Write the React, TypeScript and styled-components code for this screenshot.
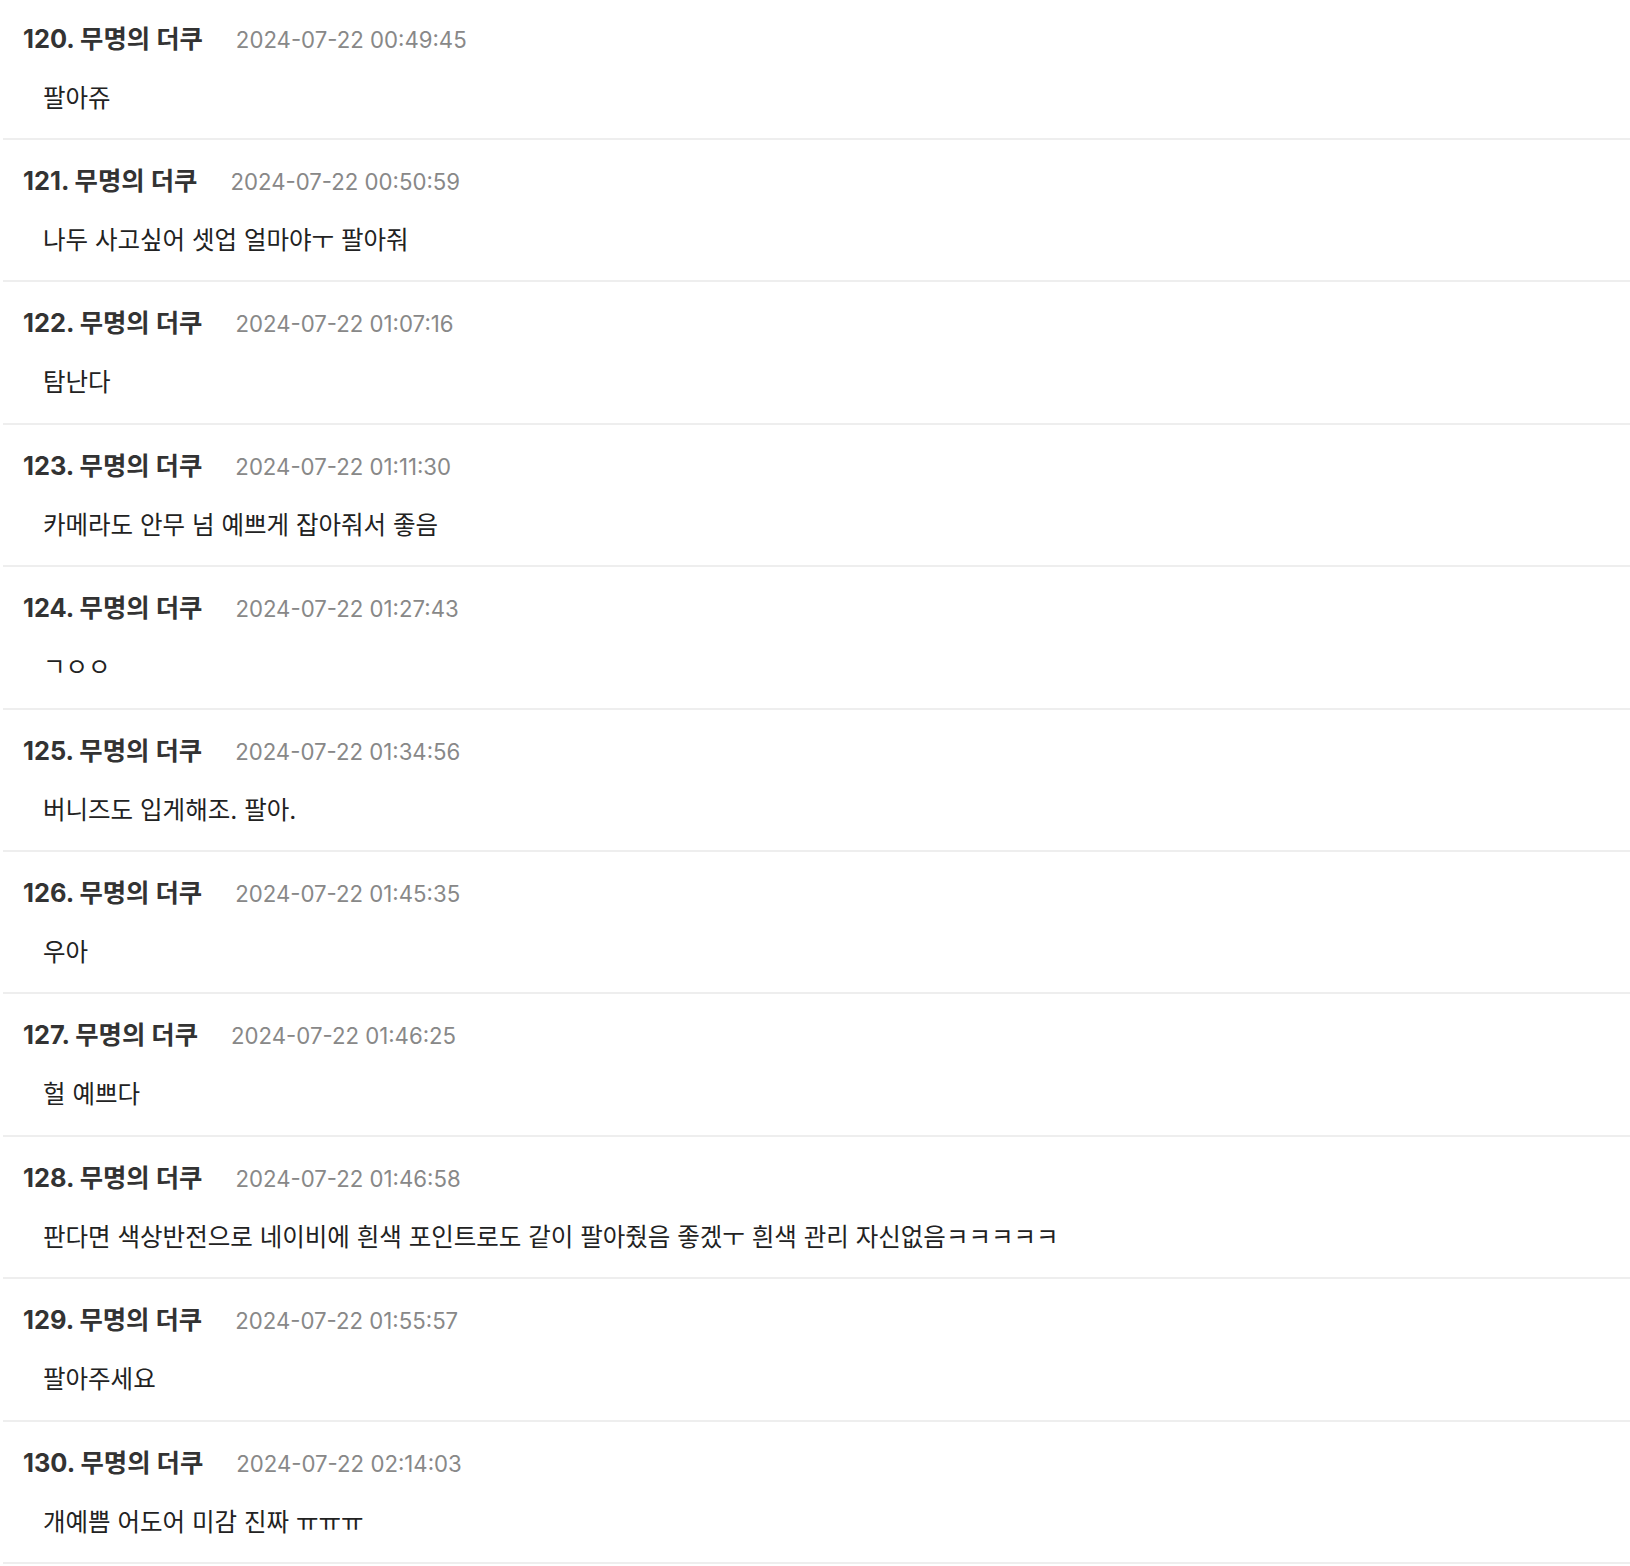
import styled, { createGlobalStyle } from "styled-components";

const GlobalStyle = createGlobalStyle`
    html, body {
        margin: 0;
        padding: 0;
        background: #ffffff;
    }
    body {
        font-family: Inter, "Noto Sans CJK KR", sans-serif;
    }
`

const Lista = styled.ul`
    list-style: none;
    margin: -2.4px 0 0 3px;
    padding: 0;
`
const Item = styled.li`
    box-sizing: border-box;
    height: 142.4px;
    padding: 23px 0 0 20px;
    border-bottom: 2px solid #eeeeee;
`
const Cabecalho = styled.div`
    display: flex;
    align-items: baseline;
    line-height: 36px;
`
const Nome = styled.span`
    font-size: 25.4px;
    font-weight: 700;
    color: #333333;
    margin-right: 33px;
`
const Data = styled.span`
    font-size: 22.2px;
    color: #888888;
`
const Texto = styled.p`
    margin: 23px 0 0 20px;
    font-size: 24.5px;
    line-height: 34px;
    color: #222222;
`

const comentarios = [
    { n: 120, data: "2024-07-22 00:49:45", texto: "팔아쥬" },
    { n: 121, data: "2024-07-22 00:50:59", texto: "나두 사고싶어 셋업 얼마야ㅜ 팔아줘" },
    { n: 122, data: "2024-07-22 01:07:16", texto: "탐난다" },
    { n: 123, data: "2024-07-22 01:11:30", texto: "카메라도 안무 넘 예쁘게 잡아줘서 좋음" },
    { n: 124, data: "2024-07-22 01:27:43", texto: "ㄱㅇㅇ" },
    { n: 125, data: "2024-07-22 01:34:56", texto: "버니즈도 입게해조. 팔아." },
    { n: 126, data: "2024-07-22 01:45:35", texto: "우아" },
    { n: 127, data: "2024-07-22 01:46:25", texto: "헐 예쁘다" },
    { n: 128, data: "2024-07-22 01:46:58", texto: "판다면 색상반전으로 네이비에 흰색 포인트로도 같이 팔아줬음 좋겠ㅜ 흰색 관리 자신없음ㅋㅋㅋㅋㅋ" },
    { n: 129, data: "2024-07-22 01:55:57", texto: "팔아주세요" },
    { n: 130, data: "2024-07-22 02:14:03", texto: "개예쁨 어도어 미감 진짜 ㅠㅠㅠ" },
]

const App = () => {
    return (
        <>
            <GlobalStyle />
            <Lista>
                {comentarios.map((c) => (
                    <Item key={c.n}>
                        <Cabecalho>
                            <Nome>{c.n}. 무명의 더쿠</Nome>
                            <Data>{c.data}</Data>
                        </Cabecalho>
                        <Texto>{c.texto}</Texto>
                    </Item>
                ))}
            </Lista>
        </>
    )
}

export default App;
